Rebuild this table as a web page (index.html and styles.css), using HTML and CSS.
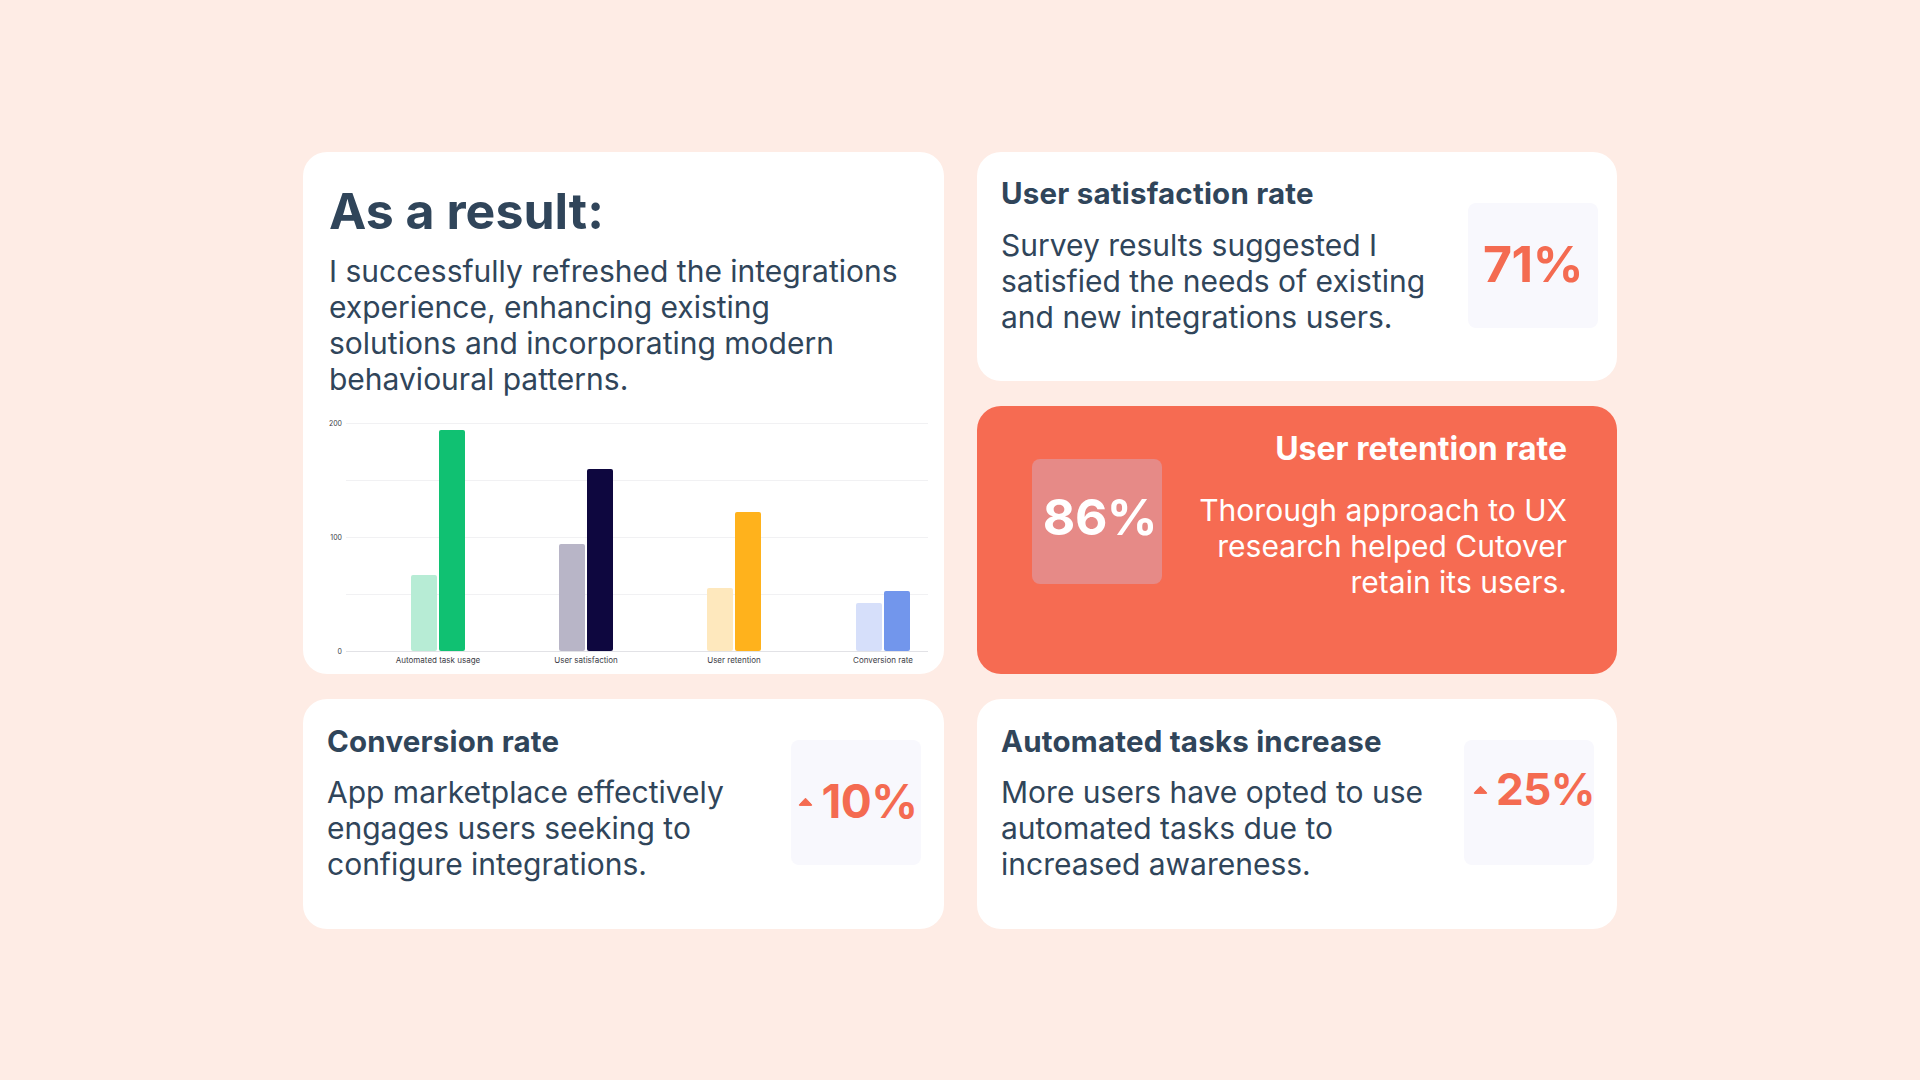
FILE: index.html
```html
<!DOCTYPE html>
<html lang="en">
<head>
<meta charset="utf-8">
<title>As a result</title>
<link rel="stylesheet" href="styles.css">
</head>
<body>
<main class="board">
  <section class="card card-result">
    <h1 class="result-title">As a result:</h1>
    <p class="result-text">I successfully refreshed the integrations<br>experience, enhancing existing<br>solutions and incorporating modern<br>behavioural patterns.</p>
    <svg class="chart" width="599" height="250" viewBox="0 0 599 250" aria-label="Bar chart">
      <g class="grid">
        <line x1="17" y1="7.5" x2="599" y2="7.5"/>
        <line x1="17" y1="64.5" x2="599" y2="64.5"/>
        <line x1="17" y1="121.5" x2="599" y2="121.5"/>
        <line x1="17" y1="178.5" x2="599" y2="178.5"/>
      </g>
      <line class="axis" x1="17" y1="235.5" x2="599" y2="235.5"/>
      <g class="ticks">
        <text x="13" y="10" text-anchor="end">200</text>
        <text x="13" y="124" text-anchor="end">100</text>
        <text x="13" y="238" text-anchor="end">0</text>
      </g>
      <rect x="82" y="159" width="26" height="76" rx="2" fill="#b7ecd5"/>
      <rect x="110" y="14" width="26" height="221" rx="2" fill="#10c172"/>
      <rect x="230" y="128" width="26" height="107" rx="2" fill="#b8b5c7"/>
      <rect x="258" y="53" width="26" height="182" rx="2" fill="#0e073f"/>
      <rect x="378" y="172" width="26" height="63" rx="2" fill="#fee8bd"/>
      <rect x="406" y="96" width="26" height="139" rx="2" fill="#ffb21c"/>
      <rect x="527" y="187" width="26" height="48" rx="2" fill="#d6dffa"/>
      <rect x="555" y="175" width="26" height="60" rx="2" fill="#7296ec"/>
      <g class="labels">
        <text x="109" y="247" text-anchor="middle">Automated task usage</text>
        <text x="257" y="247" text-anchor="middle">User satisfaction</text>
        <text x="405" y="247" text-anchor="middle">User retention</text>
        <text x="554" y="247" text-anchor="middle">Conversion rate</text>
      </g>
    </svg>
  </section>

  <section class="card card-stat card-satisfaction">
    <div class="stat-text">
      <h2 class="stat-title">User satisfaction rate</h2>
      <p class="stat-body body-upper">Survey results suggested I<br>satisfied the needs of existing<br>and new integrations users.</p>
    </div>
    <div class="value-box value-satisfaction"><span class="value">71%</span></div>
  </section>

  <section class="card card-retention">
    <div class="value-box value-retention"><span class="value value-white">86%</span></div>
    <div class="retention-text">
      <h2 class="retention-title">User retention rate</h2>
      <p class="stat-body body-white">Thorough approach to UX<br>research helped Cutover<br>retain its users.</p>
    </div>
  </section>

  <section class="card card-stat card-lower">
    <div class="stat-text">
      <h2 class="stat-title">Conversion rate</h2>
      <p class="stat-body body-lower">App marketplace effectively<br>engages users seeking to<br>configure integrations.</p>
    </div>
    <div class="value-box value-lower">
      <span class="delta">
        <svg class="arrow" width="15" height="9" viewBox="0 0 15 9"><path d="M7.5 1.2 L13.6 7.6 Q14 8.6 13 8.6 H2 Q1 8.6 1.4 7.6 Z" fill="#f46b51" stroke="#f46b51" stroke-width="1" stroke-linejoin="round"/></svg>
        <span class="value value-small">10%</span>
      </span>
    </div>
  </section>

  <section class="card card-stat card-lower">
    <div class="stat-text">
      <h2 class="stat-title">Automated tasks increase</h2>
      <p class="stat-body body-lower">More users have opted to use<br>automated tasks due to<br>increased awareness.</p>
    </div>
    <div class="value-box value-lower">
      <span class="delta delta-raised">
        <svg class="arrow" width="15" height="9" viewBox="0 0 15 9"><path d="M7.5 1.2 L13.6 7.6 Q14 8.6 13 8.6 H2 Q1 8.6 1.4 7.6 Z" fill="#f46b51" stroke="#f46b51" stroke-width="1" stroke-linejoin="round"/></svg>
        <span class="value value-smaller">25%</span>
      </span>
    </div>
  </section>
</main>
</body>
</html>
```

FILE: styles.css
```css
* {
  box-sizing: border-box;
}

html,
body {
  margin: 0;
  padding: 0;
}

body {
  background: #feece5;
  font-family: Inter, "Noto Sans", "Liberation Sans", sans-serif;
  color: #30455a;
  height: 100vh;
  display: flex;
  align-items: center;
  justify-content: center;
}

.board {
  display: grid;
  grid-template-columns: 641px 640px;
  grid-template-rows: 229px 268px 230px;
  column-gap: 33px;
  row-gap: 25px;
}

.card {
  background: #ffffff;
  border-radius: 24px;
}

h1,
h2,
p {
  margin: 0;
}

/* Result card */
.card-result {
  grid-row: 1 / span 2;
  grid-column: 1;
  padding: 29px 26px 8px 26px;
  display: flex;
  flex-direction: column;
}

.result-title {
  font-size: 50px;
  line-height: 60px;
  font-weight: 700;
}

.result-text {
  margin-top: 12px;
  font-size: 30px;
  line-height: 36px;
  font-weight: 400;
  white-space: nowrap;
}

.chart {
  display: block;
  margin-top: 19px;
  flex: none;
  overflow: visible;
}

.chart .grid line {
  stroke: #f1f1f3;
  stroke-width: 1;
}

.chart .axis {
  stroke: #e2e2e6;
  stroke-width: 1;
}

.chart text {
  font-family: Inter, "Liberation Sans", sans-serif;
  fill: #3c3c46;
}

.chart .ticks text {
  font-size: 7px;
}

.chart .labels text {
  font-size: 8px;
}

/* Stat cards */
.card-stat {
  display: flex;
  justify-content: space-between;
  align-items: flex-start;
}

.card-satisfaction {
  grid-row: 1;
  grid-column: 2;
  padding: 24px 19px 0 24px;
}

.card-lower {
  grid-row: 3;
  padding: 25px 23px 0 24px;
}

.stat-title {
  font-size: 29.5px;
  line-height: 34px;
  font-weight: 700;
  letter-spacing: 0.2px;
  white-space: nowrap;
}

.stat-body {
  font-size: 30px;
  line-height: 36px;
  font-weight: 400;
  white-space: nowrap;
}

.body-upper {
  margin-top: 17px;
}

.body-lower {
  margin-top: 16.5px;
}

.value-box {
  flex: none;
  width: 130px;
  height: 125px;
  border-radius: 8px;
  background: #f8f8fd;
  display: flex;
  align-items: center;
  justify-content: center;
}

.value-satisfaction {
  margin-top: 27px;
  padding-bottom: 3px;
}

.value-lower {
  margin-top: 16px;
  padding-bottom: 2px;
}

.value {
  font-size: 50px;
  line-height: 1;
  font-weight: 700;
  color: #f46b51;
  letter-spacing: -0.5px;
}

.value-small {
  font-size: 46px;
}

.value-smaller {
  font-size: 44px;
}

.delta {
  display: flex;
  align-items: center;
  gap: 8px;
  margin-left: 4px;
}

.delta-raised {
  margin-top: -24px;
  margin-left: 10px;
}

.arrow {
  display: block;
  flex: none;
}

/* Retention card */
.card-retention {
  grid-row: 2;
  grid-column: 2;
  background: #f66b52;
  padding: 24px 50px 0 55px;
  display: flex;
  justify-content: space-between;
  align-items: flex-start;
}

.value-retention {
  margin-top: 29px;
  padding-bottom: 8px;
  padding-left: 6px;
  background: #e68a87;
}

.value-white {
  color: #ffffff;
}

.retention-text {
  text-align: right;
}

.retention-title {
  color: #ffffff;
  font-size: 32px;
  line-height: 38px;
  font-weight: 700;
  white-space: nowrap;
}

.body-white {
  color: #ffffff;
  margin-top: 24.5px;
}
```
